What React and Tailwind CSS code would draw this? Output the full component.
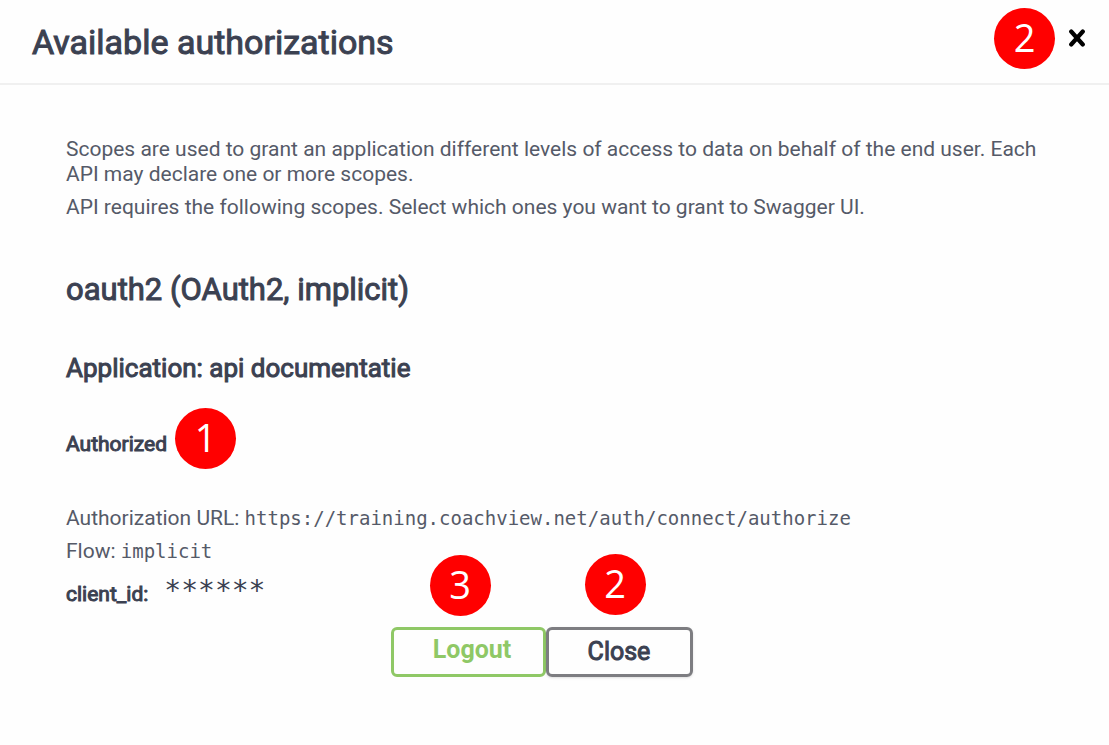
import React from "react";

const BADGE =
  "flex h-[61px] w-[61px] items-center justify-center rounded-full bg-[#ff0000] pb-1 font-['Open_Sans',sans-serif] text-[38px] leading-none font-medium text-white";

// regular weight thickened with a stroke of the text colour
const HEAVY = "font-normal [-webkit-text-stroke:1px_currentColor]";

function Badge({ children, className }) {
  return <span className={`${BADGE} ${className || ""}`}>{children}</span>;
}

function CloseIcon() {
  return (
    <svg width="20" height="20" viewBox="0 0 20 20" aria-hidden="true">
      <path
        d="M4.2 2.5L15.8 15.5M15.8 2.5L4.2 15.5"
        fill="none"
        stroke="#000"
        strokeWidth="4.2"
        strokeLinecap="round"
      />
    </svg>
  );
}

export default function App() {
  return (
    <div className="min-h-screen bg-[#fefefe] font-[Roboto,sans-serif] text-[#3b4151]">
      <header className="flex h-[85px] items-center justify-between border-b-2 border-[#f0f0f0] pr-[22px] pl-8">
        <h3 className={`text-[34px] leading-[40px] ${HEAVY}`}>Available authorizations</h3>
        <div className="flex items-center gap-3 pb-[6px]">
          <Badge>2</Badge>
          <button type="button" aria-label="Close dialog" className="cursor-pointer">
            <CloseIcon />
          </button>
        </div>
      </header>

      <main className="px-[66px] pt-[52px] pb-16">
        <div className="text-[21px] leading-[25px] text-[#555a68]">
          <p>
            Scopes are used to grant an application different levels of access to data on behalf of
            the end user. Each API may declare one or more scopes.
          </p>
          <p className="mt-2">
            API requires the following scopes. Select which ones you want to grant to Swagger UI.
          </p>
        </div>

        <h4 className={`mt-[50px] text-[31px] leading-[40px] ${HEAVY}`}>
          oauth2 (OAuth2, implicit)
        </h4>
        <h5 className={`mt-10 text-[26px] leading-[36px] ${HEAVY}`}>
          Application: api documentatie
        </h5>

        <div className="mt-[22px] flex items-center gap-2">
          <h6 className={`pt-3 text-[21px] leading-[25px] ${HEAVY}`}>Authorized</h6>
          <Badge>1</Badge>
        </div>

        <div className="mt-[37px] text-[21px] leading-[25px] text-[#555a68]">
          <p>
            Authorization URL:{" "}
            <code className="font-['DejaVu_Sans_Mono',monospace] text-[19px]">
              https://training.coachview.net/auth/connect/authorize
            </code>
          </p>
          <p className="mt-2">
            Flow:{" "}
            <code className="font-['DejaVu_Sans_Mono',monospace] text-[19px]">implicit</code>
          </p>
        </div>

        <dl className="flex items-start gap-4 pt-3">
          <dt className={`pt-[6px] text-[21px] leading-[25px] ${HEAVY}`}>client_id:</dt>
          <dd className="font-['DejaVu_Sans_Mono',monospace] text-[28px] leading-[30px]">
            ******
          </dd>
        </dl>

        <div className="mt-5 flex justify-center pr-[26px]">
          <div className="relative">
            <Badge className="absolute bottom-full left-[39px] mb-[11px]">3</Badge>
            <button
              type="button"
              className="h-[50px] w-[155px] cursor-pointer rounded-md border-3 border-[#8fc866] pb-1 pl-2 text-[25px] font-bold text-[#8fc866]"
            >
              Logout
            </button>
          </div>
          <div className="relative">
            <Badge className="absolute bottom-full left-[39px] mb-3">2</Badge>
            <button
              type="button"
              className={`h-[50px] w-[147px] cursor-pointer rounded-md border-3 border-[#7d7d81] text-[25px] shadow-sm ${HEAVY}`}
            >
              Close
            </button>
          </div>
        </div>
      </main>
    </div>
  );
}
